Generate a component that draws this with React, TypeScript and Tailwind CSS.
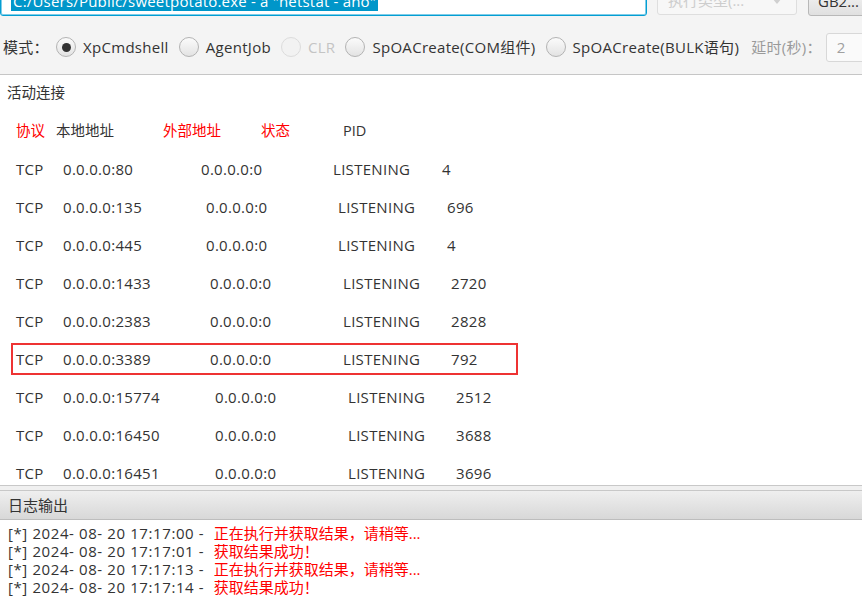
import React from 'react';

type Row = { local: string; foreign: string; pid: string; w1: string; w2: string; w3: string };

const rows: Row[] = [
  { local: '0.0.0.0:80', foreign: '0.0.0.0:0', pid: '4', w1: 'w-[138px]', w2: 'w-[132px]', w3: 'w-[109px]' },
  { local: '0.0.0.0:135', foreign: '0.0.0.0:0', pid: '696', w1: 'w-[143px]', w2: 'w-[132px]', w3: 'w-[109px]' },
  { local: '0.0.0.0:445', foreign: '0.0.0.0:0', pid: '4', w1: 'w-[143px]', w2: 'w-[132px]', w3: 'w-[109px]' },
  { local: '0.0.0.0:1433', foreign: '0.0.0.0:0', pid: '2720', w1: 'w-[147px]', w2: 'w-[133px]', w3: 'w-[108px]' },
  { local: '0.0.0.0:2383', foreign: '0.0.0.0:0', pid: '2828', w1: 'w-[147px]', w2: 'w-[133px]', w3: 'w-[108px]' },
  { local: '0.0.0.0:3389', foreign: '0.0.0.0:0', pid: '792', w1: 'w-[147px]', w2: 'w-[133px]', w3: 'w-[108px]' },
  { local: '0.0.0.0:15774', foreign: '0.0.0.0:0', pid: '2512', w1: 'w-[152px]', w2: 'w-[133px]', w3: 'w-[108px]' },
  { local: '0.0.0.0:16450', foreign: '0.0.0.0:0', pid: '3688', w1: 'w-[152px]', w2: 'w-[133px]', w3: 'w-[108px]' },
  { local: '0.0.0.0:16451', foreign: '0.0.0.0:0', pid: '3696', w1: 'w-[152px]', w2: 'w-[133px]', w3: 'w-[108px]' },
];

const logs = [
  { time: '2024- 08- 20 17:17:00', msg: '正在执行并获取结果，请稍等...' },
  { time: '2024- 08- 20 17:17:01', msg: '获取结果成功！' },
  { time: '2024- 08- 20 17:17:13', msg: '正在执行并获取结果，请稍等...' },
  { time: '2024- 08- 20 17:17:14', msg: '获取结果成功！' },
];

function Radio({ checked, disabled }: { checked?: boolean; disabled?: boolean }) {
  return (
    <span
      className={`w-[20px] h-[20px] rounded-full border flex items-center justify-center shrink-0 ${
        disabled
          ? 'border-[#dcdcdc] bg-[#f2f2f2]'
          : 'border-[#b3b3b3] bg-gradient-to-b from-[#fbfbfb] to-[#e3e3e3]'
      }`}
    >
      {checked && <span className="w-[9px] h-[9px] rounded-full bg-[#333]" />}
    </span>
  );
}

function Option({ label, checked, disabled }: { label: React.ReactNode; checked?: boolean; disabled?: boolean }) {
  return (
    <div className="flex items-center shrink-0">
      <Radio checked={checked} disabled={disabled} />
      <span className={`ml-[7px] ${disabled ? 'text-[#c4c4c4]' : 'text-[#333]'}`}>{label}</span>
    </div>
  );
}

function Cells({ r }: { r: Row }) {
  return (
    <>
      <span className="w-[47px]">TCP</span>
      <span className={r.w1}>{r.local}</span>
      <span className={r.w2}>{r.foreign}</span>
      <span className={r.w3}>LISTENING</span>
      <span>{r.pid}</span>
    </>
  );
}

export default function App() {
  return (
    <div
      className="w-[862px] h-[603px] overflow-hidden bg-[#f4f4f4] flex flex-col text-[#333]"
      style={{ fontFamily: '"Open Sans", "Noto Sans CJK SC", sans-serif' }}
    >
      {/* top toolbar */}
      <div className="border-b border-[#c6c6c6] h-[75px] shrink-0 text-[15px]">
        <div className="flex items-start -mt-[14px] h-[30px]">
          <div className="w-[647px] h-[30px] bg-white border border-[#039ed3] rounded-[3px] shadow-[inset_0_0_0_1px_#7fcde8] flex items-center pl-[10px] shrink-0 overflow-hidden">
            <span className="bg-[#0096c9] text-white px-[2px] leading-[20px] tracking-[0.2px] whitespace-nowrap">
              C:/Users/Public/sweetpotato.exe - a "netstat - ano"
            </span>
          </div>
          <div className="ml-[10px] w-[140px] h-[29px] border border-[#dedede] rounded-[3px] bg-[#f7f7f7] flex items-center pl-[10px] pr-[14px] justify-between text-[#cdcdcd] shrink-0">
            <span>执行类型(...</span>
            <svg width="10" height="6" viewBox="0 0 10 6"><path d="M0 0h10L5 6z" fill="#d0d0d0" /></svg>
          </div>
          <div className="ml-[11px] w-[70px] h-[30px] border border-[#b8b8b8] rounded-[3px] bg-gradient-to-b from-[#f6f6f6] to-[#e0e0e0] flex items-center pl-[9px] shrink-0">
            GB2...
          </div>
        </div>
        <div className="flex items-center h-[30px] mt-[16px] whitespace-nowrap tracking-[0.3px]">
          <span className="ml-[3px] w-[53px] shrink-0">模式：</span>
          <div className="flex items-center gap-[10px] shrink-0">
            <Option label="XpCmdshell" checked />
            <Option label="AgentJob" />
            <Option label="CLR" disabled />
            <Option label="SpOACreate(COM组件)" />
            <Option label="SpOACreate(BULK语句)" />
          </div>
          <span className="ml-[12px] text-[#9a9a9a] shrink-0">延时(秒)：</span>
          <div className="ml-[4px] w-[45px] h-[29px] border border-[#d8d8d8] rounded-[3px] bg-[#fafafa] flex items-center pl-[10px] text-[#a0a0a0] shrink-0">
            2
          </div>
        </div>
      </div>

      {/* result text */}
      <div className="bg-white h-[411px] shrink-0 overflow-hidden border-b border-[#c8c8c8] text-[15px] tracking-[0.3px] whitespace-nowrap">
        <div className="h-[38px] -mt-px flex items-center pl-[7px] text-[14.5px] tracking-normal">活动连接</div>
        <div className="h-[38px] flex items-center pl-[16px] text-[14.5px] tracking-normal">
          <span className="w-[40px] text-[#f00]">协议</span>
          <span className="w-[107px]">本地地址</span>
          <span className="w-[98px] text-[#f00]">外部地址</span>
          <span className="w-[82px] text-[#f00]">状态</span>
          <span>PID</span>
        </div>
        {rows.map((r) =>
          r.pid === '792' ? (
            <div key={r.local} className="h-[38px] flex items-center">
              <div className="ml-[11px] w-[507px] h-[32px] border-2 border-[#ee3333] flex items-center pl-[3px]">
                <Cells r={r} />
              </div>
            </div>
          ) : (
            <div key={r.local} className="h-[38px] flex items-center pl-[16px]">
              <Cells r={r} />
            </div>
          )
        )}
      </div>

      {/* divider */}
      <div className="h-[5px] bg-[#f0f0f0] border-b border-[#c8c8c8] shrink-0" />

      {/* log title */}
      <div className="h-[29px] bg-gradient-to-b from-[#efefef] to-[#d8d8d8] border-b border-[#bdbdbd] flex items-center pl-[8px] text-[15px] shrink-0">
        日志输出
      </div>

      {/* log output */}
      <div className="flex-1 bg-white pt-[4px] pl-[8px] text-[15px] leading-[18px] whitespace-nowrap">
        {logs.map((l) => (
          <div key={l.time}>
            <span className="tracking-[0.6px]">[*] {l.time} - </span>
            <span className="ml-[5px] text-[#f00]">{l.msg}</span>
          </div>
        ))}
      </div>
    </div>
  );
}
